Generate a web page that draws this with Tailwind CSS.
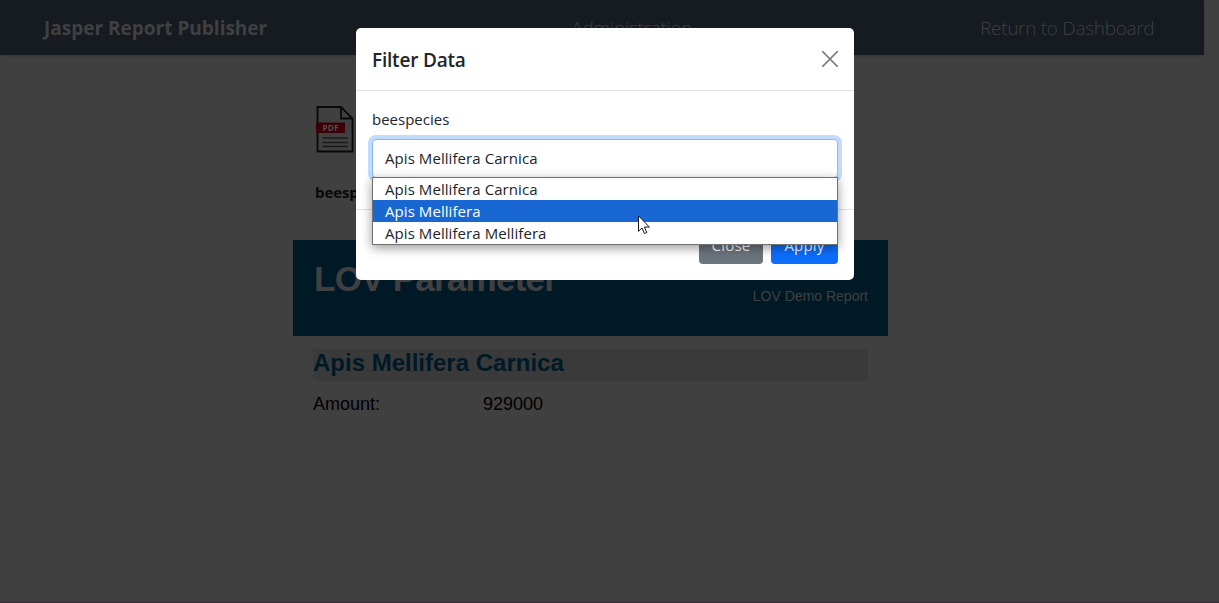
<!DOCTYPE html>
<html lang="en">
<head>
<meta charset="utf-8">
<title>Jasper Report Publisher</title>
<script src="https://cdn.jsdelivr.net/npm/@tailwindcss/browser@4"></script>
</head>
<body class="relative h-[603px] w-[1219px] overflow-hidden bg-[#404040] font-['Open_Sans','Noto_Sans',sans-serif] text-[#212529]">
  <header class="flex h-[55px] w-[1204px] items-center justify-between bg-[#161a21] pl-11 pr-[49px] pt-[2px] text-[19px] text-[#404040] shadow-sm">
    <span class="w-[239px] whitespace-nowrap font-bold">Jasper Report Publisher</span>
    <span class="w-[120px] whitespace-nowrap font-light tracking-[-0.3px]">Administration</span>
    <span class="w-[175px] whitespace-nowrap font-light tracking-[-0.3px]">Return to Dashboard</span>
  </header>
  <main class="ml-[293px] w-[595px]">
    <div class="pl-[22px] pt-[50px]">
      <svg class="block" width="40" height="50" viewBox="0 0 40 50" fill="none">
        <path d="M2.500 2h23.500L37.500 13.500V46.500H2.500Z" stroke="#090909" stroke-width="1.800"/>
        <path d="M26 2v11.500h11.500" stroke="#090909" stroke-width="1.800"/>
        <path d="M7.500 33h25.500M7.500 37.500h25.500M7.500 41.500h25.500" stroke="#181818" stroke-width="1.500"/>
        <path d="M1 17.500h29v10.500H1Z" fill="#3b0007"/>
        <text x="7.500" y="26" font-family="Open Sans" font-weight="700" font-size="8" textLength="16" fill="#515151">PDF</text>
      </svg>
      <p class="mt-[25px] text-[15px] font-bold leading-6 text-[#080909] tracking-[-0.1px]">beespecies</p>
    </div>
    <section class="mt-9 font-['Liberation_Sans',Arial,sans-serif]">
      <div class="flex h-24 items-start justify-between bg-[#001926] pl-[21px] pr-5 text-[#404040]">
        <h1 class="pt-[18px] text-[35px] font-bold leading-[42px] tracking-[-0.75px]">LOV Parameter</h1>
        <span class="pt-[46px] text-[14px] leading-5">LOV Demo Report</span>
      </div>
      <h2 class="ml-5 mt-[13px] h-8 w-[555px] whitespace-nowrap bg-[#3a3a3a] text-[24px] font-bold leading-7 text-[#001926]">Apis Mellifera Carnica</h2>
      <div class="mt-3 flex pl-5 text-[18px] leading-[22px] text-black"><span class="w-[170px]">Amount:</span><span>929000</span></div>
    </section>
  </main>
  <div class="absolute inset-x-0 bottom-0 h-px bg-[#383038]"></div>

  <div class="absolute left-[356px] top-7 h-[252px] w-[498px] rounded-[5px] bg-white" role="dialog">
    <div class="flex h-[63px] items-center justify-between border-b border-[#dee2e6] px-4">
      <h5 class="pt-[2px] text-[19px] font-semibold leading-[30px] tracking-[-0.2px]">Filter Data</h5>
      <svg class="block" width="16" height="16" viewBox="0 0 16 16"><path d="M.7.7l14.600 14.600M15.300.7L.7 15.300" stroke="#808080" stroke-width="1.700" stroke-linecap="round"/></svg>
    </div>
    <div class="h-[119px] border-b border-[#dee2e6] px-4 pt-4 text-[15px]">
      <label class="block h-8 leading-6">beespecies</label>
      <div class="h-[39px] rounded-[4px] border border-[#86b7fe] bg-white px-3 leading-[37px] tracking-[0.07px] shadow-[0_0_0_4px_#c2dbfe]">Apis Mellifera Carnica</div>
    </div>
    <div class="flex justify-end gap-2 px-4 pt-4 text-center text-[15px] leading-[38px] tracking-[0.2px] text-white">
      <div class="h-[38px] w-16 rounded-[4px] bg-[#6c757d]">Close</div>
      <div class="h-[38px] w-[67px] rounded-[4px] bg-[#0d6efd]">Apply</div>
    </div>
    <div class="absolute left-4 top-[149px] h-[68px] w-[466px] border border-[#707070] bg-white text-[15px] leading-[22px] tracking-[0.07px] text-[#212529] shadow-[0_3px_10px_rgba(0,0,0,0.4)]">
      <div class="h-[22px] px-3">Apis Mellifera Carnica</div>
      <div class="h-[22px] bg-[#1967d2] px-3 text-white">Apis Mellifera</div>
      <div class="h-[22px] px-3">Apis Mellifera Mellifera</div>
    </div>
  </div>
  <svg class="absolute left-[638px] top-[215px]" width="12" height="20" viewBox="0 0 12 20"><path d="M.5.8v15.500l3.500-3.300 2.400 5.500 2.400-1-2.400-5.400h5Z" fill="#fff" stroke="#151525" stroke-width="1"/></svg>
</body>
</html>
